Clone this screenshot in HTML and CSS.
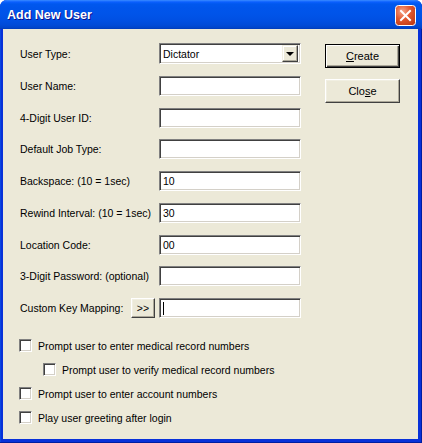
FILE: index.html
```html
<!DOCTYPE html>
<html>
<head>
<meta charset="utf-8">
<title>Add New User</title>
<link rel="stylesheet" href="styles.css">
</head>
<body>
<div class="window">
  <div class="titlebar">
    <span class="title">Add New User</span>
    <span class="close-x" aria-label="Close">
      <svg width="21" height="21" viewBox="0 0 21 21">
        <defs>
          <radialGradient id="xg" cx="35%" cy="30%" r="80%">
            <stop offset="0" stop-color="#f6a58a"/>
            <stop offset="0.5" stop-color="#e2572e"/>
            <stop offset="1" stop-color="#c23c14"/>
          </radialGradient>
        </defs>
        <rect x="0.5" y="0.5" width="20" height="20" rx="3" fill="url(#xg)" stroke="#fff"/>
        <path d="M6 6 L15 15 M15 6 L6 15" stroke="#fff" stroke-width="2" stroke-linecap="square"/>
      </svg>
    </span>
  </div>
  <div class="client">
    <div class="main">
      <div class="form">
        <label class="lbl">User Type:</label>
        <div class="combo"><span class="combo-text">Dictator</span><span class="combo-btn"><span class="arrow"></span></span></div>

        <label class="lbl">User Name:</label>
        <div class="field"></div>

        <label class="lbl">4-Digit User ID:</label>
        <div class="field"></div>

        <label class="lbl">Default Job Type:</label>
        <div class="field"></div>

        <label class="lbl">Backspace: (10 = 1sec)</label>
        <div class="field">10</div>

        <label class="lbl">Rewind Interval: (10 = 1sec)</label>
        <div class="field">30</div>

        <label class="lbl">Location Code:</label>
        <div class="field">00</div>

        <label class="lbl">3-Digit Password: (optional)</label>
        <div class="field"></div>

        <div class="lbl lbl-with-btn"><span>Custom Key Mapping:</span><span class="btn btn-small">&gt;&gt;</span></div>
        <div class="field"><span class="caret"></span></div>
      </div>
      <div class="actions">
        <div class="btn btn-default"><span><u>C</u>reate</span></div>
        <div class="btn"><span>Clo<u>s</u>e</span></div>
      </div>
    </div>
    <div class="checks">
      <div class="check"><span class="box"></span><span>Prompt user to enter medical record numbers</span></div>
      <div class="check indent"><span class="box"></span><span>Prompt user to verify medical record numbers</span></div>
      <div class="check"><span class="box"></span><span>Prompt user to enter account numbers</span></div>
      <div class="check"><span class="box"></span><span>Play user greeting after login</span></div>
    </div>
  </div>
</div>
</body>
</html>
```
FILE: styles.css
```css
html, body {
  margin: 0;
  padding: 0;
  background: #ffffff;
}

body {
  font-family: "Liberation Sans", Arial, sans-serif;
  font-size: 10.5px;
  color: #000;
}

.window {
  width: 422px;
  height: 443px;
  display: flex;
  flex-direction: column;
  border-radius: 7px 7px 0 0;
  background: #0831d9;
  box-shadow: inset -1px -1px 0 #001ea0, inset 1px 0 0 #0a46e0;
  overflow: hidden;
}

.titlebar {
  height: 29px;
  flex: none;
  display: flex;
  align-items: center;
  padding: 0 6px 0 7px;
  background: linear-gradient(to bottom,
    #3a8cff 0, #0a5fff 2px, #0058ee 4px, #0055eb 8px,
    #0054e9 14px, #0050e3 20px, #004bd8 25px, #0044c9 28px, #0039b4 29px);
}

.title {
  flex: 1;
  color: #fff;
  font-family: "Liberation Sans", Arial, sans-serif;
  font-weight: bold;
  font-size: 12.5px;
  text-shadow: 1px 1px 0 #0f1089;
  padding-top: 1px;
}

.close-x {
  width: 21px;
  height: 21px;
  display: block;
  margin-top: 1px;
}

.close-x svg {
  display: block;
}

.client {
  flex: 1;
  margin: 0 4px 4px 3px;
  background: #ece9d8;
  display: flex;
  flex-direction: column;
  padding: 15px 0 0 17px;
}

.main {
  display: flex;
  gap: 24px;
}

.form {
  display: grid;
  grid-template-columns: 139px 142px;
  grid-auto-rows: 20px;
  row-gap: 11.75px;
}

.lbl {
  display: flex;
  align-items: center;
  white-space: nowrap;
}

.lbl-with-btn .btn-small {
  margin-left: auto;
  margin-right: 4px;
}

.field,
.combo {
  box-sizing: border-box;
  height: 20px;
  background: #fff;
  border: 1px solid;
  border-color: #808080 #ffffff #ffffff #808080;
  box-shadow: inset 1px 1px 0 #404040, inset -1px -1px 0 #d4d0c8;
  padding: 0 3px;
  display: flex;
  align-items: center;
}

.combo {
  padding: 0 2px 0 3px;
  height: 21px;
  margin-top: -1px;
}

.combo-text {
  flex: 1;
}

.combo-btn {
  width: 16px;
  height: 17px;
  box-sizing: border-box;
  background: #ece9d8;
  border: 1px solid;
  border-color: #f1efe2 #404040 #404040 #f1efe2;
  box-shadow: inset -1px -1px 0 #aca899, inset 1px 1px 0 #fff;
  display: flex;
  align-items: center;
  justify-content: center;
}

.arrow {
  width: 0;
  height: 0;
  border-left: 4px solid transparent;
  border-right: 4px solid transparent;
  border-top: 4px solid #000;
  margin-top: 1px;
}

.caret {
  width: 1px;
  height: 13px;
  background: #000;
}

.actions {
  display: flex;
  flex-direction: column;
  gap: 11px;
}

.btn {
  box-sizing: border-box;
  width: 75px;
  height: 24px;
  background: #ece9d8;
  border: 1px solid;
  border-color: #ffffff #404040 #404040 #ffffff;
  box-shadow: inset -1px -1px 0 #aca899, inset 1px 1px 0 #f1efe2;
  display: flex;
  align-items: center;
  justify-content: center;
  padding-bottom: 1px;
  font-size: 11px;
}

.btn-default {
  border: 1px solid #000;
  box-shadow: inset 1px 1px 0 #fff, inset -1px -1px 0 #404040, inset -2px -2px 0 #aca899;
}

.btn-small {
  width: 24px;
  height: 20px;
  font-size: 10.5px;
}

.checks {
  display: flex;
  flex-direction: column;
  gap: 11px;
  margin: 21px 0 0 -1px;
}

.check {
  display: flex;
  align-items: center;
  gap: 6px;
  height: 13px;
}

.check.indent {
  padding-left: 24px;
}

.box {
  box-sizing: border-box;
  width: 13px;
  height: 13px;
  background: #fff;
  border: 1px solid;
  border-color: #808080 #ffffff #ffffff #808080;
  box-shadow: inset 1px 1px 0 #404040, inset -1px -1px 0 #d4d0c8;
}
```
